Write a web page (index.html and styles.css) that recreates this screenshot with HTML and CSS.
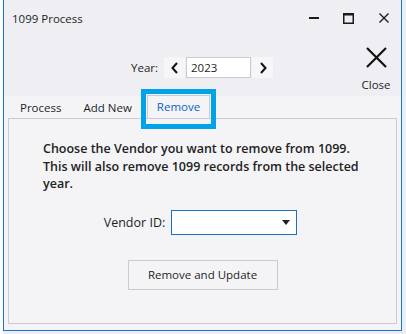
FILE: index.html
```html
<!DOCTYPE html>
<html lang="en">
<head>
  <meta charset="UTF-8" />
  <title>1099 Process</title>
  <link rel="stylesheet" href="styles.css">
</head>
<body>
  <div class="window">
    <div class="titlebar">
      <span class="title">1099 Process</span>
      <div class="win-buttons">
        <button class="win-btn" type="button">
          <svg width="10" height="10" viewBox="0 0 10 10"><rect x="0" y="4" width="10" height="2" fill="#1b1b1b"/></svg>
        </button>
        <button class="win-btn" type="button">
          <svg width="11" height="11" viewBox="0 0 11 11"><rect x="0.75" y="0.75" width="9.5" height="9.5" fill="none" stroke="#1b1b1b" stroke-width="1.5"/><rect x="0" y="0" width="11" height="2.5" fill="#1b1b1b"/></svg>
        </button>
        <button class="win-btn" type="button">
          <svg width="10" height="10" viewBox="0 0 10 10"><path d="M0.5 0.5 L9.5 9.5 M9.5 0.5 L0.5 9.5" stroke="#1b1b1b" stroke-width="1.4"/></svg>
        </button>
      </div>
    </div>

    <div class="toolbar">
      <div class="year-group">
        <span class="year-label">Year:</span>
        <button class="step-btn" type="button">
          <svg width="8" height="12" viewBox="0 0 8 12"><path d="M6 1 L1.5 6 L6 11" fill="none" stroke="#111" stroke-width="2"/></svg>
        </button>
        <input class="year-input" type="text" value="2023">
        <button class="step-btn" type="button">
          <svg width="8" height="12" viewBox="0 0 8 12"><path d="M2 1 L6.5 6 L2 11" fill="none" stroke="#111" stroke-width="2"/></svg>
        </button>
      </div>
      <button class="close-btn" type="button">
        <svg width="21" height="21" viewBox="0 0 21 21"><path d="M1 1 L20 20 M20 1 L1 20" stroke="#111" stroke-width="2.2"/></svg>
        <span>Close</span>
      </button>
    </div>

    <div class="tabs">
      <span class="tab">Process</span>
      <span class="tab">Add New</span>
      <span class="tab active">Remove</span>
    </div>

    <div class="panel">
      <p class="notice">Choose the Vendor you want to remove from 1099. This will also remove 1099 records from the selected year.</p>

      <div class="vendor-row">
        <label for="vendor">Vendor ID:</label>
        <div class="combo" id="vendor">
          <svg width="8" height="5" viewBox="0 0 8 5"><path d="M0 0 L8 0 L4 5 Z" fill="#222"/></svg>
        </div>
      </div>

      <div class="actions">
        <button class="update-btn" type="button">Remove and Update</button>
      </div>
    </div>
  </div>
</body>
</html>
```

FILE: styles.css
```css
body {
  margin: 0;
  height: 334px;
  background: linear-gradient(to right, #ffffff 0, #ffffff 3px, #eaeef5 3px);
  font-family: "Open Sans", "Noto Sans", sans-serif;
  color: #1e1e1e;
  overflow: hidden;
}

.window {
  margin-left: 3px;
  width: 397px;
  height: 330px;
  border: 1px solid #1a74c9;
  border-top: none;
  background: #f4f4f7;
  display: flex;
  flex-direction: column;
}

.titlebar {
  height: 36px;
  display: flex;
  align-items: center;
  justify-content: space-between;
  background: #efeff3;
}

.title {
  padding-left: 8px;
  font-size: 11.5px;
}

.win-buttons {
  display: flex;
  height: 100%;
}

.win-btn {
  width: 35px;
  height: 100%;
  border: none;
  background: transparent;
  display: flex;
  align-items: center;
  justify-content: center;
  padding: 0;
}

.toolbar {
  height: 60px;
  background: #efeff3;
  display: flex;
  justify-content: flex-end;
  align-items: flex-start;
}

.year-group {
  display: flex;
  align-items: center;
  margin-top: 21px;
  margin-right: 83px;
}

.year-label {
  font-size: 11.5px;
  margin-right: 6px;
}

.step-btn {
  width: 21px;
  height: 21px;
  border: none;
  background: #f6f6f8;
  display: flex;
  align-items: center;
  justify-content: center;
  padding: 0;
}

.year-input {
  width: 55px;
  height: 19px;
  margin: 0 1px;
  padding: 0 4px;
  border: 1px solid #c9c9d9;
  background: #fff;
  font-family: inherit;
  font-size: 11.5px;
  color: #1e1e1e;
}

.close-btn {
  width: 40px;
  margin-top: 11px;
  margin-right: 5px;
  border: none;
  background: transparent;
  padding: 0;
  display: flex;
  flex-direction: column;
  align-items: center;
  gap: 9px;
  font-family: inherit;
  font-size: 11.5px;
  color: #1e1e1e;
}

.tabs {
  height: 22px;
  display: flex;
  align-items: flex-end;
  padding-left: 10px;
}

.tab {
  position: relative;
  height: 21px;
  padding: 0 6px;
  font-size: 11.5px;
  line-height: 21px;
  margin-right: 10px;
}

.tab.active {
  color: #0b63c7;
  border: 1px solid #cbcbd8;
  border-bottom: none;
  height: 22px;
  padding: 0 9px;
  margin-left: -1px;
  z-index: 1;
}

.tab.active::after {
  content: "";
  position: absolute;
  left: -7px;
  right: -7px;
  top: -7px;
  bottom: -11px;
  border: 5px solid #00a2e8;
}

.panel {
  margin: 0 4px 6px 4px;
  flex: 1;
  border: 1px solid #cbcbd8;
  background: #f4f4f7;
}

.notice {
  margin: 21px 30px 0 34px;
  font-size: 12.5px;
  font-weight: 600;
  line-height: 17.5px;
  color: #222;
}

.vendor-row {
  display: flex;
  align-items: center;
  justify-content: center;
  gap: 6px;
  margin-top: 17px;
  margin-right: 4px;
}

.vendor-row label {
  font-size: 12.5px;
}

.combo {
  width: 126px;
  height: 25px;
  border: 1px solid #1a6fc8;
  background: #fff;
  display: flex;
  align-items: center;
  justify-content: flex-end;
  padding-right: 6px;
  box-sizing: border-box;
}

.actions {
  display: flex;
  justify-content: center;
  margin-top: 25px;
}

.update-btn {
  width: 150px;
  height: 30px;
  border: 1px solid #cbcbd8;
  background: #f4f4f7;
  font-family: inherit;
  font-size: 11.5px;
  color: #1e1e1e;
}
```
